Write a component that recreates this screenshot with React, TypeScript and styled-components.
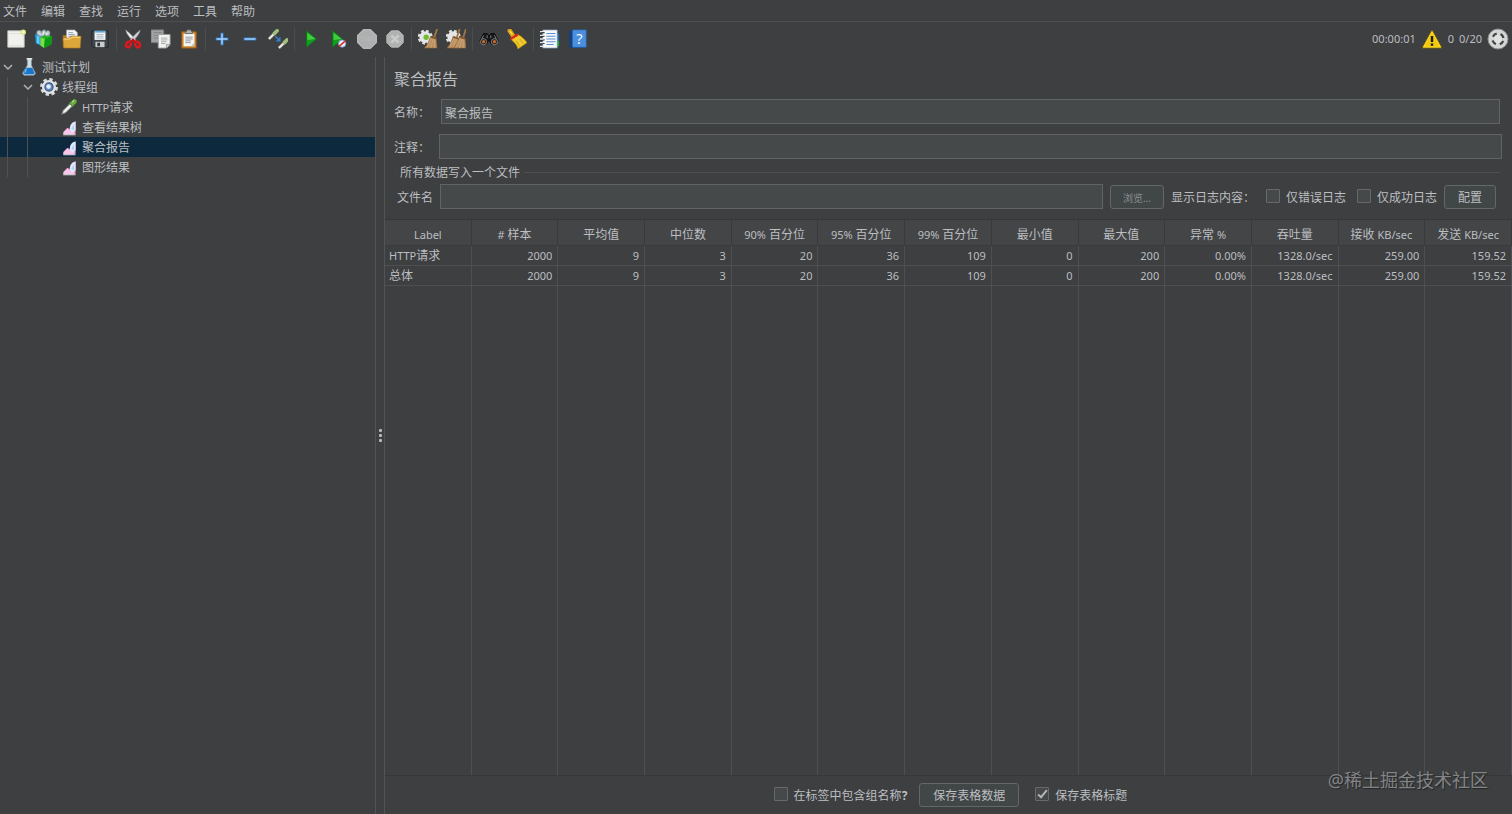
import React from "react";
import styled, { createGlobalStyle, css } from "styled-components";

const c = {
  bg: "#3d3f41",
  field: "#45494a",
  line: "#4d5052",
  edge: "#606465",
  text: "#bcbec0",
  select: "#0d293e",
};

const GlobalStyle = createGlobalStyle`
  *, *::before, *::after { box-sizing: border-box; }
  body { margin: 0; background: ${c.bg}; }
  body, button, input, table {
    font-family: "Noto Sans", "Noto Sans CJK SC", sans-serif;
    font-size: 12px;
    line-height: 16px;
    color: ${c.text};
  }
  svg { display: block; }
`;

const Shell = styled.div`
  position: relative;
  display: flex;
  flex-direction: column;
  height: 100vh;
  overflow: hidden;
  white-space: nowrap;
`;

const MenuBar = styled.nav`
  display: flex;
  gap: 14px;
  height: 22px;
  padding: 2px 3px 0;
  border-bottom: 1px solid ${c.line};
`;

const MenuItem = styled.button`
  padding: 0;
  border: 0;
  background: none;
`;

const ToolBar = styled.div`
  display: flex;
  align-items: center;
  height: 35px;
  padding: 0 3px 2px 2px;
`;

const ToolButton = styled.button`
  display: grid;
  place-items: center;
  width: 28px;
  height: 28px;
  padding: 0;
  border: 0;
  background: none;
`;

const ToolDivider = styled.span`
  width: 1px;
  height: 24px;
  margin: 0 2px;
  background: #4b4e50;
`;

const Status = styled.div`
  display: flex;
  align-items: center;
  gap: 5px;
  margin-left: auto;
  font-size: 11px;
`;

const Body = styled.div`
  flex: 1;
  display: flex;
  min-height: 0;
`;

const TreePanel = styled.aside`
  flex: 0 0 375px;
  overflow: hidden;
`;

const TreeRow = styled.div<{ $selected?: boolean }>`
  display: flex;
  align-items: stretch;
  height: 20px;
  background: ${(p) => (p.$selected ? c.select : "transparent")};
`;

const Guide = styled.span<{ $on?: boolean }>`
  flex: 0 0 20px;
  padding-left: 7px;
  &::before {
    content: "";
    display: block;
    width: 1px;
    height: 100%;
    background: ${(p) => (p.$on ? "#505355" : "transparent")};
  }
`;

const Twist = styled.button`
  display: grid;
  place-items: center;
  width: 20px;
  padding: 0 4px 0 0;
  border: 0;
  background: none;
`;

const NodeLabel = styled.span`
  display: flex;
  align-items: center;
  gap: 4px;
  height: 20px;
`;

const NodeText = styled.span`
  padding-top: 2px;
`;

const Splitter = styled.div`
  flex: 0 0 10px;
  display: flex;
  flex-direction: column;
  align-items: center;
  justify-content: center;
  gap: 2px;
  border: solid #515456;
  border-width: 0 1px;
`;

const Dot = styled.i`
  width: 3px;
  height: 3px;
  border-radius: 1px;
  background: #b8babb;
`;

const Main = styled.main`
  flex: 1;
  min-width: 0;
  display: flex;
  flex-direction: column;
`;

const Form = styled.form`
  padding: 12px 10px 10px 9px;
`;

const Title = styled.h1`
  margin: 0 0 10px;
  font-size: 16px;
  font-weight: 400;
  line-height: 20px;
`;

const FormRow = styled.div<{ $gap?: number; $inset?: boolean }>`
  display: flex;
  align-items: center;
  margin-bottom: ${(p) => p.$gap ?? 0}px;
  padding-right: ${(p) => (p.$inset ? 2 : 0)}px;
`;

const FieldName = styled.label<{ $width: number }>`
  flex: 0 0 ${(p) => p.$width}px;
  padding-top: 3px;
`;

const TextField = styled.input`
  flex: 1;
  min-width: 0;
  height: 25px;
  padding: 2px 3px 0;
  border: 1px solid ${c.edge};
  background: ${c.field};
  outline: 0;
`;

const Group = styled.fieldset`
  min-width: 0;
  margin: 0 2px 0;
  padding: 3px 4px 0 1px;
  border: 0;
  border-top: 1px solid ${c.line};
`;

const GroupName = styled.legend`
  padding: 1px 4px 0 3px;
`;

const FileRow = styled.div`
  display: flex;
  align-items: center;
  gap: 7px;
`;

const Caption = styled.label`
  padding-top: 2px;
`;

const Check = styled.label`
  display: flex;
  align-items: center;
  gap: 6px;
  margin-left: 4px;
  padding-top: 2px;
`;

const Box = styled.input`
  appearance: none;
  display: grid;
  place-items: center;
  width: 14px;
  height: 14px;
  margin: 0 0 4px;
  border: 1px solid #666a6c;
  border-radius: 1px;
  background: ${c.field};
  &:checked::after {
    content: "";
    width: 5px;
    height: 10px;
    margin-bottom: 3px;
    border: solid #b4b6b7;
    border-width: 0 2px 2px 0;
    transform: rotate(40deg);
  }
`;

const Button = styled.button<{ $width: number; $muted?: boolean }>`
  width: ${(p) => p.$width}px;
  height: 24px;
  padding: 2px 0 0;
  border: 1px solid #626768;
  border-radius: 3px;
  background: #414647;
  ${(p) =>
    p.$muted &&
    css`
      font-size: 10px;
      color: #8c8f91;
    `}
`;

const TableArea = styled.div`
  flex: 1;
  min-height: 0;
  border-top: 1px solid #343638;
  border-bottom: 1px solid #353739;
`;

const Table = styled.table`
  width: 100%;
  height: 100%;
  table-layout: fixed;
  border-collapse: separate;
  border-spacing: 0;
`;

const Th = styled.th`
  height: 26px;
  padding: 4px 0 0;
  border-right: 1px solid #383a3c;
  border-bottom: 1px solid #383a3c;
  background: #434547;
  font-weight: 400;
`;

const Td = styled.td<{ $start?: boolean }>`
  height: 20px;
  padding: 0 5px 0 4px;
  border-right: 1px solid ${c.line};
  border-bottom: 1px solid ${c.line};
  font-size: ${(p) => (p.$start ? 12 : 11)}px;
  text-align: ${(p) => (p.$start ? "left" : "right")};
`;

const Filler = styled.td`
  border-right: 1px solid ${c.line};
`;

const Latin = styled.span`
  font-size: 11px;
`;

const Footer = styled.footer`
  display: flex;
  align-items: center;
  justify-content: center;
  gap: 12px;
  height: 38px;
`;

const Watermark = styled.div`
  position: absolute;
  right: 24px;
  bottom: 22px;
  font-size: 18px;
  line-height: 24px;
  color: #828486;
  text-shadow: 1px 1px 1px #242526;
`;

const Svg = ({ children, size = 20 }: { children: React.ReactNode; size?: number }) => (
  <svg width={size} height={size} viewBox="0 0 22 22" fill="none" aria-hidden="true">
    {children}
  </svg>
);

const Dropper = () => (
  <>
    <path d="M2 20 4 15 12 7l3 3-8 8z" fill="#dfe3dc" stroke="#707870" />
    <path d="M5 17 13 9" stroke="#fff" strokeWidth="1.5" />
    <path d="m11 6 5 5 1-2 3-3c2-3-2-6-4-4l-3 3z" fill="#6fae43" stroke="#3f6c2a" strokeWidth=".7" />
    <path d="m15 5 2-2" stroke="#c3e5a3" strokeWidth="1.4" />
  </>
);

const MiniDropper = () => (
  <>
    <path d="M1 11 8 4" stroke="#555b52" strokeWidth="4" />
    <path d="M1 11 8 4" stroke="#e9ebe4" strokeWidth="2.400" />
    <path d="m7 5 3-3" stroke="#a3bf7c" strokeWidth="4" strokeLinecap="round" />
  </>
);

const Broom = ({ x = 0 }: { x?: number }) => (
  <g transform={`translate(${x} 0)`}>
    <path d="m20 0-3 9" stroke="#a77642" strokeWidth="2" />
    <path d="m13 8 6 2 1 11H6c3-3 5-7 7-13z" fill="#b98e60" stroke="#805a34" strokeWidth=".7" />
    <path d="m14 10-5 10M16 10l-3 11M17 11v10" stroke="#d3ad7c" strokeWidth=".8" />
    <path d="m13 9 6 2" stroke="#79502c" strokeWidth="1.3" />
  </g>
);

const CogShape = () => (
  <>
    <circle cx="8" cy="9" r="6.8" stroke="#dddfe0" strokeWidth="3" strokeDasharray="3 2.34" />
    <circle cx="8" cy="9" r="6.4" fill="#e4e6e6" />
  </>
);

const icons: Record<string, React.ReactNode> = {
  新建: (
    <>
      <path d="M2 2h18v18H2z" fill="#f1f1ee" stroke="#c4c4bf" />
      <path d="M4 5h12M4 18h13" stroke="#dededa" />
      <circle cx="19" cy="3.500" r="3" fill="#dfe78a" />
      <circle cx="19" cy="3.500" r="1.300" fill="#fbffd0" />
    </>
  ),
  模板: (
    <>
      <path d="m1 6 8-4 4 5-4 12-7-3z" fill="#1a8fd5" />
      <path d="m3 7 3 1v9l-3-2z" fill="#67c9f4" />
      <path d="m7 9 6-3 7 2-1 9-8 4-4-3z" fill="#20b31b" />
      <path d="m7 9 5 2-1 10-4-3z" fill="#79e04d" />
      <path d="m12 11 8-3-1 9-8 4z" fill="#0c9816" />
      <path d="M3 5c-1-4 5-5 5-1 1-4 5-4 5-1 3-3 6 0 4 4-2 2-4 0-5-1-3 3-6 3-9-1z" fill="#b8c5c9" stroke="#718489" strokeWidth=".7" />
      <path d="M5 4 7 6M11 3l-1 4M15 4l-2 3" stroke="#edf3f4" />
    </>
  ),
  打开: (
    <>
      <path d="M1 7h5l2 2h11v11H1z" fill="#bd7f19" />
      <path d="M5 1h9l3 3v9H5z" fill="#f3f4f5" stroke="#9ea2a5" strokeWidth=".7" />
      <path d="M7 4h5M7 6h7M7 8h7" stroke="#8898aa" />
      <path d="M1 10h7l2-2h11l-1 13H2z" fill="#dda63a" stroke="#a8711b" strokeWidth=".7" />
      <path d="M2 11h7l2-2h9" stroke="#ffe08b" />
    </>
  ),
  保存: (
    <>
      <path d="M2 2h18v18H3l-1-2z" fill="#404549" stroke="#24282a" />
      <path d="M5 2h12v10H5z" fill="#f4f6f8" />
      <path d="M5 2h12v2H5z" fill="#62a8d5" />
      <path d="M7 6h8M7 8h8M7 10h8" stroke="#a8b2bb" />
      <path d="M6 14h10v6H6z" fill="#c9ccce" />
      <path d="M8 15h3v4H8z" fill="#34383b" />
    </>
  ),
  剪切: (
    <>
      <path d="M3 1c1 5 5 9 9 13l2-2C11 8 7 4 3 1z" fill="#eceeee" stroke="#969a9c" strokeWidth=".6" />
      <path d="M19 1c-1 5-5 9-9 13l-2-2C11 8 15 4 19 1z" fill="#d2d5d7" stroke="#898e91" strokeWidth=".6" />
      <ellipse cx="6" cy="17" rx="2.400" ry="3.200" stroke="#d91b20" strokeWidth="2.800" transform="rotate(25 6 17)" />
      <ellipse cx="16" cy="17" rx="2.400" ry="3.200" stroke="#d91b20" strokeWidth="2.800" transform="rotate(-25 16 17)" />
      <path d="m8 15 3-3 3 3" stroke="#c70f17" strokeWidth="2.400" />
    </>
  ),
  复制: (
    <>
      <path d="M0 1h14v14H0z" fill="#a1a3a4" stroke="#777a7b" />
      <path d="M3 4h9M3 7h7M3 10h5" stroke="#7e8182" />
      <path d="M8 6h13v11l-4 4H8z" fill="#f1f2f0" stroke="#999c9b" />
      <path d="M11 10h7M11 12h7M11 14h6M11 16h5" stroke="#a4a7a7" />
      <path d="M17 21v-4h4" fill="#cfd2d2" stroke="#999c9b" />
    </>
  ),
  粘贴: (
    <>
      <path d="M3 3h16v18H3z" fill="#ce8528" stroke="#925915" />
      <path d="M5 5h12v14H5z" fill="#f3f4f4" />
      <path d="M7 5c0-2 2-2 2-4h4c0 2 2 2 2 4z" fill="#aeb4b7" stroke="#646a6d" />
      <path d="M7 9h8M7 11h8M7 13h6M7 15h6" stroke="#8d9498" />
      <path d="m13 19 4-4v4z" fill="#b6bbbd" />
    </>
  ),
  展开: (
    <>
      <path d="M11 4v14M4 11h14" stroke="#347bc2" strokeWidth="3.400" />
      <path d="M11 5v12M5 11h12" stroke="#a4d3ff" strokeWidth="1.600" />
    </>
  ),
  折叠: (
    <>
      <path d="M4 11h14" stroke="#347bc2" strokeWidth="3.400" />
      <path d="M5 11h12" stroke="#a4d3ff" strokeWidth="1.600" />
    </>
  ),
  切换: (
    <>
      <MiniDropper />
      <g transform="translate(11 10)"><MiniDropper /></g>
      <path d="m8 8 5 5m0-4v4H9" stroke="#3583d4" strokeWidth="1.500" />
    </>
  ),
  启动: (
    <>
      <path d="m6 2 11 9-11 9z" fill="#139c1d" stroke="#087510" strokeWidth=".7" />
      <path d="m7 4 9 7-9 1z" fill="#41cc41" />
    </>
  ),
  不停顿启动: (
    <>
      <path d="m4 2 11 9-11 9z" fill="#139c1d" stroke="#087510" strokeWidth=".7" />
      <path d="m5 4 9 7-9 1z" fill="#41cc41" />
      <circle cx="14.500" cy="16" r="4" fill="#e9f0f7" stroke="#6d9ed0" />
      <path d="m11 19 7-6" stroke="#dc3030" strokeWidth="1.800" />
    </>
  ),
  停止: (
    <>
      <path d="M7 0h8l7 7v8l-7 7H7l-7-7V7z" fill="#aeb0b0" />
      <path d="M7 1h8l6 6v8l-6 6H7l-6-6V7z" stroke="#bcbebe" />
      <path d="M4 9h3M4 13h3M9 9v4M12 9h2v4h-2zM17 13V9h2" stroke="#b8baba" />
    </>
  ),
  关闭: (
    <>
      <path d="M7 2h8l5 5v8l-5 5H7l-5-5V7z" fill="#b0b2b2" stroke="#bcbebe" />
      <path d="m7 7 8 8m0-8-8 8" stroke="#c9cbcb" strokeWidth="3" />
    </>
  ),
  清除: (
    <>
      <CogShape />
      <circle cx="9" cy="9" r="3" fill="#70bd34" />
      <Broom x={1} />
    </>
  ),
  清除全部: (
    <>
      <CogShape />
      <Broom x={-5} />
      <Broom x={2} />
    </>
  ),
  搜索: (
    <>
      <path d="M5 5h4l2 3 2-3h4l4 8-2 4h-5l-3-5-3 5H3l-2-4z" fill="#171819" stroke="#090a0a" />
      <path d="m5 7-2 4M17 7l2 4M9 7v3M13 7v3" stroke="#85898b" />
      <circle cx="5" cy="14" r="3.400" fill="#312015" stroke="#85888a" />
      <circle cx="17" cy="14" r="3.400" fill="#312015" stroke="#85888a" />
      <circle cx="5" cy="14" r="1.800" fill="#c56a31" />
      <circle cx="17" cy="14" r="1.800" fill="#c56a31" />
    </>
  ),
  重置搜索: (
    <>
      <path d="m3 2 4 6" stroke="#d9a20b" strokeWidth="5" strokeLinecap="round" />
      <path d="m4 11 8-5c4 2 7 5 10 9l-10 7c-1-5-4-7-8-11z" fill="#f0ca2c" stroke="#b98609" strokeWidth=".7" />
      <path d="m4 11 8-5" stroke="#d92a1d" strokeWidth="2.600" />
      <path d="m10 13 4 6M14 11l4 5" stroke="#c79b12" />
      <path d="m3 2 3 4" stroke="#ffe477" strokeWidth="1.400" />
    </>
  ),
  函数助手: (
    <>
      <path d="M15 5h6v14h-6z" fill="#2569b8" />
      <path d="M18 13h3v6h-3z" fill="#25a52c" />
      <path d="M3 1h16v20H3z" fill="#f7f9fb" stroke="#6c88a8" strokeWidth=".7" />
      <path d="M7 5h10M7 8h10M7 11h10M7 14h10M7 17h8" stroke="#5e90cb" strokeWidth="1.200" />
      <path d="M1 4h4M1 8h4M1 12h4M1 16h4" stroke="#1f2326" strokeWidth="1.200" />
      <path d="M0 3h4M0 7h4M0 11h4M0 15h4M0 19h4" stroke="#e4e8ea" strokeWidth="1.400" />
    </>
  ),
  帮助: (
    <>
      <path d="M1 3 4 1h15v20H4l-3-1z" fill="#173f78" />
      <path d="M5 1h15v19H5z" fill="#4c8fdf" stroke="#2a6abb" strokeWidth=".7" />
      <text x="12.500" y="16" fill="#f2f8ff" fontSize="16" textAnchor="middle">?</text>
    </>
  ),
};

const toolGroups = [
  ["新建", "模板", "打开", "保存"],
  ["剪切", "复制", "粘贴"],
  ["展开", "折叠", "切换"],
  ["启动", "不停顿启动", "停止", "关闭"],
  ["清除", "清除全部"],
  ["搜索", "重置搜索"],
  ["函数助手", "帮助"],
];

const WarningIcon = () => (
  <Svg size={22}>
    <path d="M11 2 21 20H1z" fill="#f2c911" stroke="#6e5c0a" strokeLinejoin="round" />
    <path d="M11 3.500 19.500 19H2.500z" stroke="#ffe02e" strokeWidth=".8" />
    <path d="M11 8v6" stroke="#1c1a10" strokeWidth="2.400" />
    <path d="M11 15.500v2.300" stroke="#1c1a10" strokeWidth="2.400" />
  </Svg>
);

const RemoteIcon = () => (
  <Svg size={22}>
    <circle cx="11" cy="11" r="10" fill="#d4d5d5" stroke="#8d8f90" />
    <circle cx="11" cy="11" r="5.500" stroke="#414344" strokeWidth="2.400" strokeDasharray="4.600 4.040" strokeDashoffset="-2" />
    <circle cx="11" cy="11" r="4" fill="#dfe0e0" />
  </Svg>
);

const FlaskIcon = () => (
  <Svg size={18}>
    <path d="M9 1h5v8l5 10-2 2H5l-2-2L9 9z" fill="#cfdde6" stroke="#8499a5" strokeWidth=".8" />
    <path d="m7 12-3 7 2 1h10l2-1-3-7z" fill="#1876cc" />
    <path d="m8 13-2 5" stroke="#75bdf4" strokeWidth="1.500" />
    <path d="M8 1h7" stroke="#f7fafb" strokeWidth="1.600" />
  </Svg>
);

const GearIcon = () => (
  <Svg size={18}>
    <circle cx="11" cy="11" r="9" stroke="#d7dadc" strokeWidth="4" strokeDasharray="4 3.070" />
    <circle cx="11" cy="11" r="8.600" fill="#dfe2e4" />
    <circle cx="11" cy="11" r="5" fill="#5d83bd" stroke="#3c557c" strokeWidth="1.400" />
    <circle cx="10.500" cy="10.500" r="2.800" fill="#e3eefa" />
  </Svg>
);

const DropperIcon = () => (
  <Svg size={18}>
    <Dropper />
  </Svg>
);

const ChartIcon = () => (
  <Svg size={18}>
    <path d="M4 20v-3l5-5 4 2 5-9h1v15z" fill="#e9a5d8" />
    <path d="m5 17 4-4 4 3 4-2v6H4z" fill="#f7c7ea" />
    <path d="M12 13c0-5 3-8 7-9v11l-3 2c-2 0-4-1-4-4z" fill="#dceafc" />
    <path d="m14 13 3-5v7z" fill="#b4caee" />
    <path d="M4 20.500h15" stroke="#fff" />
  </Svg>
);

const Chevron = () => (
  <svg width="10" height="6" viewBox="0 0 10 6" fill="none" aria-hidden="true">
    <path d="m1 1 4 4 4-4" stroke="#afb1b3" strokeWidth="1.500" />
  </svg>
);

const leaves = [
  { name: <><Latin>HTTP</Latin>请求</>, icon: <DropperIcon /> },
  { name: "查看结果树", icon: <ChartIcon /> },
  { name: "聚合报告", icon: <ChartIcon />, selected: true },
  { name: "图形结果", icon: <ChartIcon /> },
];

const columns: React.ReactNode[] = [
  <Latin>Label</Latin>,
  <><Latin># </Latin>样本</>,
  "平均值",
  "中位数",
  <><Latin>90% </Latin>百分位</>,
  <><Latin>95% </Latin>百分位</>,
  <><Latin>99% </Latin>百分位</>,
  "最小值",
  "最大值",
  <>异常<Latin> %</Latin></>,
  "吞吐量",
  <>接收<Latin> KB/sec</Latin></>,
  <>发送<Latin> KB/sec</Latin></>,
];

const values = ["2000", "9", "3", "20", "36", "109", "0", "200", "0.00%", "1328.0/sec", "259.00", "159.52"];
const rows: React.ReactNode[] = [<><Latin>HTTP</Latin>请求</>, "总体"];

export default function App() {
  return (
    <Shell>
      <GlobalStyle />
      <MenuBar>
        {["文件", "编辑", "查找", "运行", "选项", "工具", "帮助"].map((m) => (
          <MenuItem key={m}>{m}</MenuItem>
        ))}
      </MenuBar>
      <ToolBar>
        {toolGroups.map((group, i) => (
          <React.Fragment key={i}>
            {i > 0 && <ToolDivider />}
            {group.map((name) => (
              <ToolButton key={name} aria-label={name}>
                <Svg>{icons[name]}</Svg>
              </ToolButton>
            ))}
          </React.Fragment>
        ))}
        <Status>
          <span>00:00:01</span>
          <WarningIcon />
          <span>0</span>
          <span>0/20</span>
          <RemoteIcon />
        </Status>
      </ToolBar>
      <Body>
        <TreePanel>
          <TreeRow>
            <Twist aria-label="折叠测试计划"><Chevron /></Twist>
            <NodeLabel><FlaskIcon /><NodeText>测试计划</NodeText></NodeLabel>
          </TreeRow>
          <TreeRow>
            <Guide $on />
            <Twist aria-label="折叠线程组"><Chevron /></Twist>
            <NodeLabel><GearIcon /><NodeText>线程组</NodeText></NodeLabel>
          </TreeRow>
          {leaves.map((leaf, i) => (
            <TreeRow key={i} $selected={leaf.selected}>
              <Guide $on />
              <Guide $on />
              <Guide />
              <NodeLabel>{leaf.icon}<NodeText>{leaf.name}</NodeText></NodeLabel>
            </TreeRow>
          ))}
        </TreePanel>
        <Splitter>
          <Dot />
          <Dot />
          <Dot />
        </Splitter>
        <Main>
          <Form onSubmit={(e) => e.preventDefault()}>
            <Title>聚合报告</Title>
            <FormRow $gap={10} $inset>
              <FieldName $width={47} htmlFor="name">名称：</FieldName>
              <TextField id="name" defaultValue="聚合报告" />
            </FormRow>
            <FormRow $gap={5}>
              <FieldName $width={45} htmlFor="comment">注释：</FieldName>
              <TextField id="comment" />
            </FormRow>
            <Group>
              <GroupName>所有数据写入一个文件</GroupName>
              <FileRow>
                <Caption htmlFor="file">文件名</Caption>
                <TextField id="file" />
                <Button type="button" $width={54} $muted>浏览...</Button>
                <Caption as="span">显示日志内容：</Caption>
                <Check><Box type="checkbox" />仅错误日志</Check>
                <Check><Box type="checkbox" />仅成功日志</Check>
                <Button type="button" $width={52}>配置</Button>
              </FileRow>
            </Group>
          </Form>
          <TableArea>
            <Table>
              <thead>
                <tr>
                  {columns.map((name, i) => (
                    <Th key={i}>{name}</Th>
                  ))}
                </tr>
              </thead>
              <tbody>
                {rows.map((name, i) => (
                  <tr key={i}>
                    <Td $start>{name}</Td>
                    {values.map((v, j) => (
                      <Td key={j}>{v}</Td>
                    ))}
                  </tr>
                ))}
                <tr aria-hidden="true">
                  {columns.map((_, i) => (
                    <Filler key={i} />
                  ))}
                </tr>
              </tbody>
            </Table>
          </TableArea>
          <Footer>
            <Check><Box type="checkbox" /><span>在标签中包含组名称<b>?</b></span></Check>
            <Button type="button" $width={100}>保存表格数据</Button>
            <Check><Box type="checkbox" defaultChecked />保存表格标题</Check>
          </Footer>
        </Main>
      </Body>
      <Watermark>@稀土掘金技术社区</Watermark>
    </Shell>
  );
}
